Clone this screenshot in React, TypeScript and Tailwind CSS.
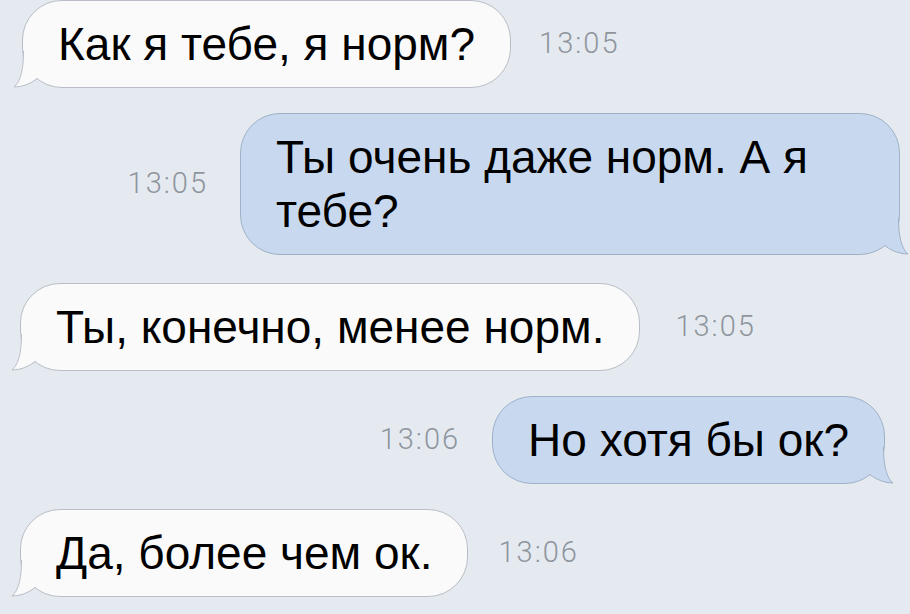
import type React from "react"

type Side = "in" | "out"

interface Message {
  side: Side
  text: React.ReactNode
  time: string
  bubbleClass: string
  rowClass: string
}

const messages: Message[] = [
  {
    side: "in",
    text: "Как я тебе, я норм?",
    time: "13:05",
    bubbleClass: "h-[88px]",
    rowClass: "pl-[22px] gap-[28px]",
  },
  {
    side: "out",
    text: (
      <>
        Ты очень даже норм. А я
        <br />
        тебе?
      </>
    ),
    time: "13:05",
    bubbleClass: "h-[142px] w-[660px] leading-[54px]",
    rowClass: "pr-[10px] gap-[32px] mt-[25px]",
  },
  {
    side: "in",
    text: "Ты, конечно, менее норм.",
    time: "13:05",
    bubbleClass: "h-[88px]",
    rowClass: "pl-[20px] gap-[35px] mt-[28px]",
  },
  {
    side: "out",
    text: "Но хотя бы ок?",
    time: "13:06",
    bubbleClass: "h-[88px]",
    rowClass: "pr-[25px] gap-[32px] mt-[25px]",
  },
  {
    side: "in",
    text: "Да, более чем ок.",
    time: "13:06",
    bubbleClass: "h-[88px]",
    rowClass: "pl-[20px] gap-[30px] mt-[25px]",
  },
]

const Tail: React.FC<{ side: Side }> = ({ side }) => {
  const fill = side === "in" ? "#fafafa" : "#c8d9ef"
  const stroke = side === "in" ? "#b9bec6" : "#9fb1c8"
  return (
    <svg
      width="40"
      height="44"
      viewBox="0 0 40 44"
      className={
        side === "in"
          ? "absolute left-[-12px] bottom-[-1px]"
          : "absolute right-[-12px] bottom-[-1px] -scale-x-100"
      }
    >
      <path d="M12.5 7 C12.5 27 9 38 3 43 Q15 43 26 34 L26 7 Z" fill={fill} />
      <path d="M12.5 7 C12.5 27 9 38 3 43 Q15 43 26.5 34.5" fill="none" stroke={stroke} strokeWidth="1" />
    </svg>
  )
}

const Bubble: React.FC<{ m: Message }> = ({ m }) => (
  <div
    className={`relative flex items-center rounded-[40px] border px-[35px] text-[46px] text-black ${
      m.side === "in" ? "bg-[#fafafa] border-[#b9bec6]" : "bg-[#c8d9ef] border-[#9fb1c8]"
    } ${m.bubbleClass}`}
  >
    <span>{m.text}</span>
    <Tail side={m.side} />
  </div>
)

const Time: React.FC<{ t: string }> = ({ t }) => (
  <span className="text-[29px] font-light tracking-[2px] text-[#8f959d] [font-family:Roboto,'Liberation_Sans',sans-serif]">
    {t}
  </span>
)

export default function App() {
  return (
    <div className="w-[910px] h-[614px] overflow-hidden bg-[#e5eaf1] flex flex-col [font-family:'Liberation_Sans',Arial,sans-serif]">
      {messages.map((m, i) => (
        <div
          key={i}
          className={`flex items-center ${m.side === "in" ? "justify-start" : "justify-end"} ${m.rowClass}`}
        >
          {m.side === "out" && <Time t={m.time} />}
          <Bubble m={m} />
          {m.side === "in" && <Time t={m.time} />}
        </div>
      ))}
    </div>
  )
}
